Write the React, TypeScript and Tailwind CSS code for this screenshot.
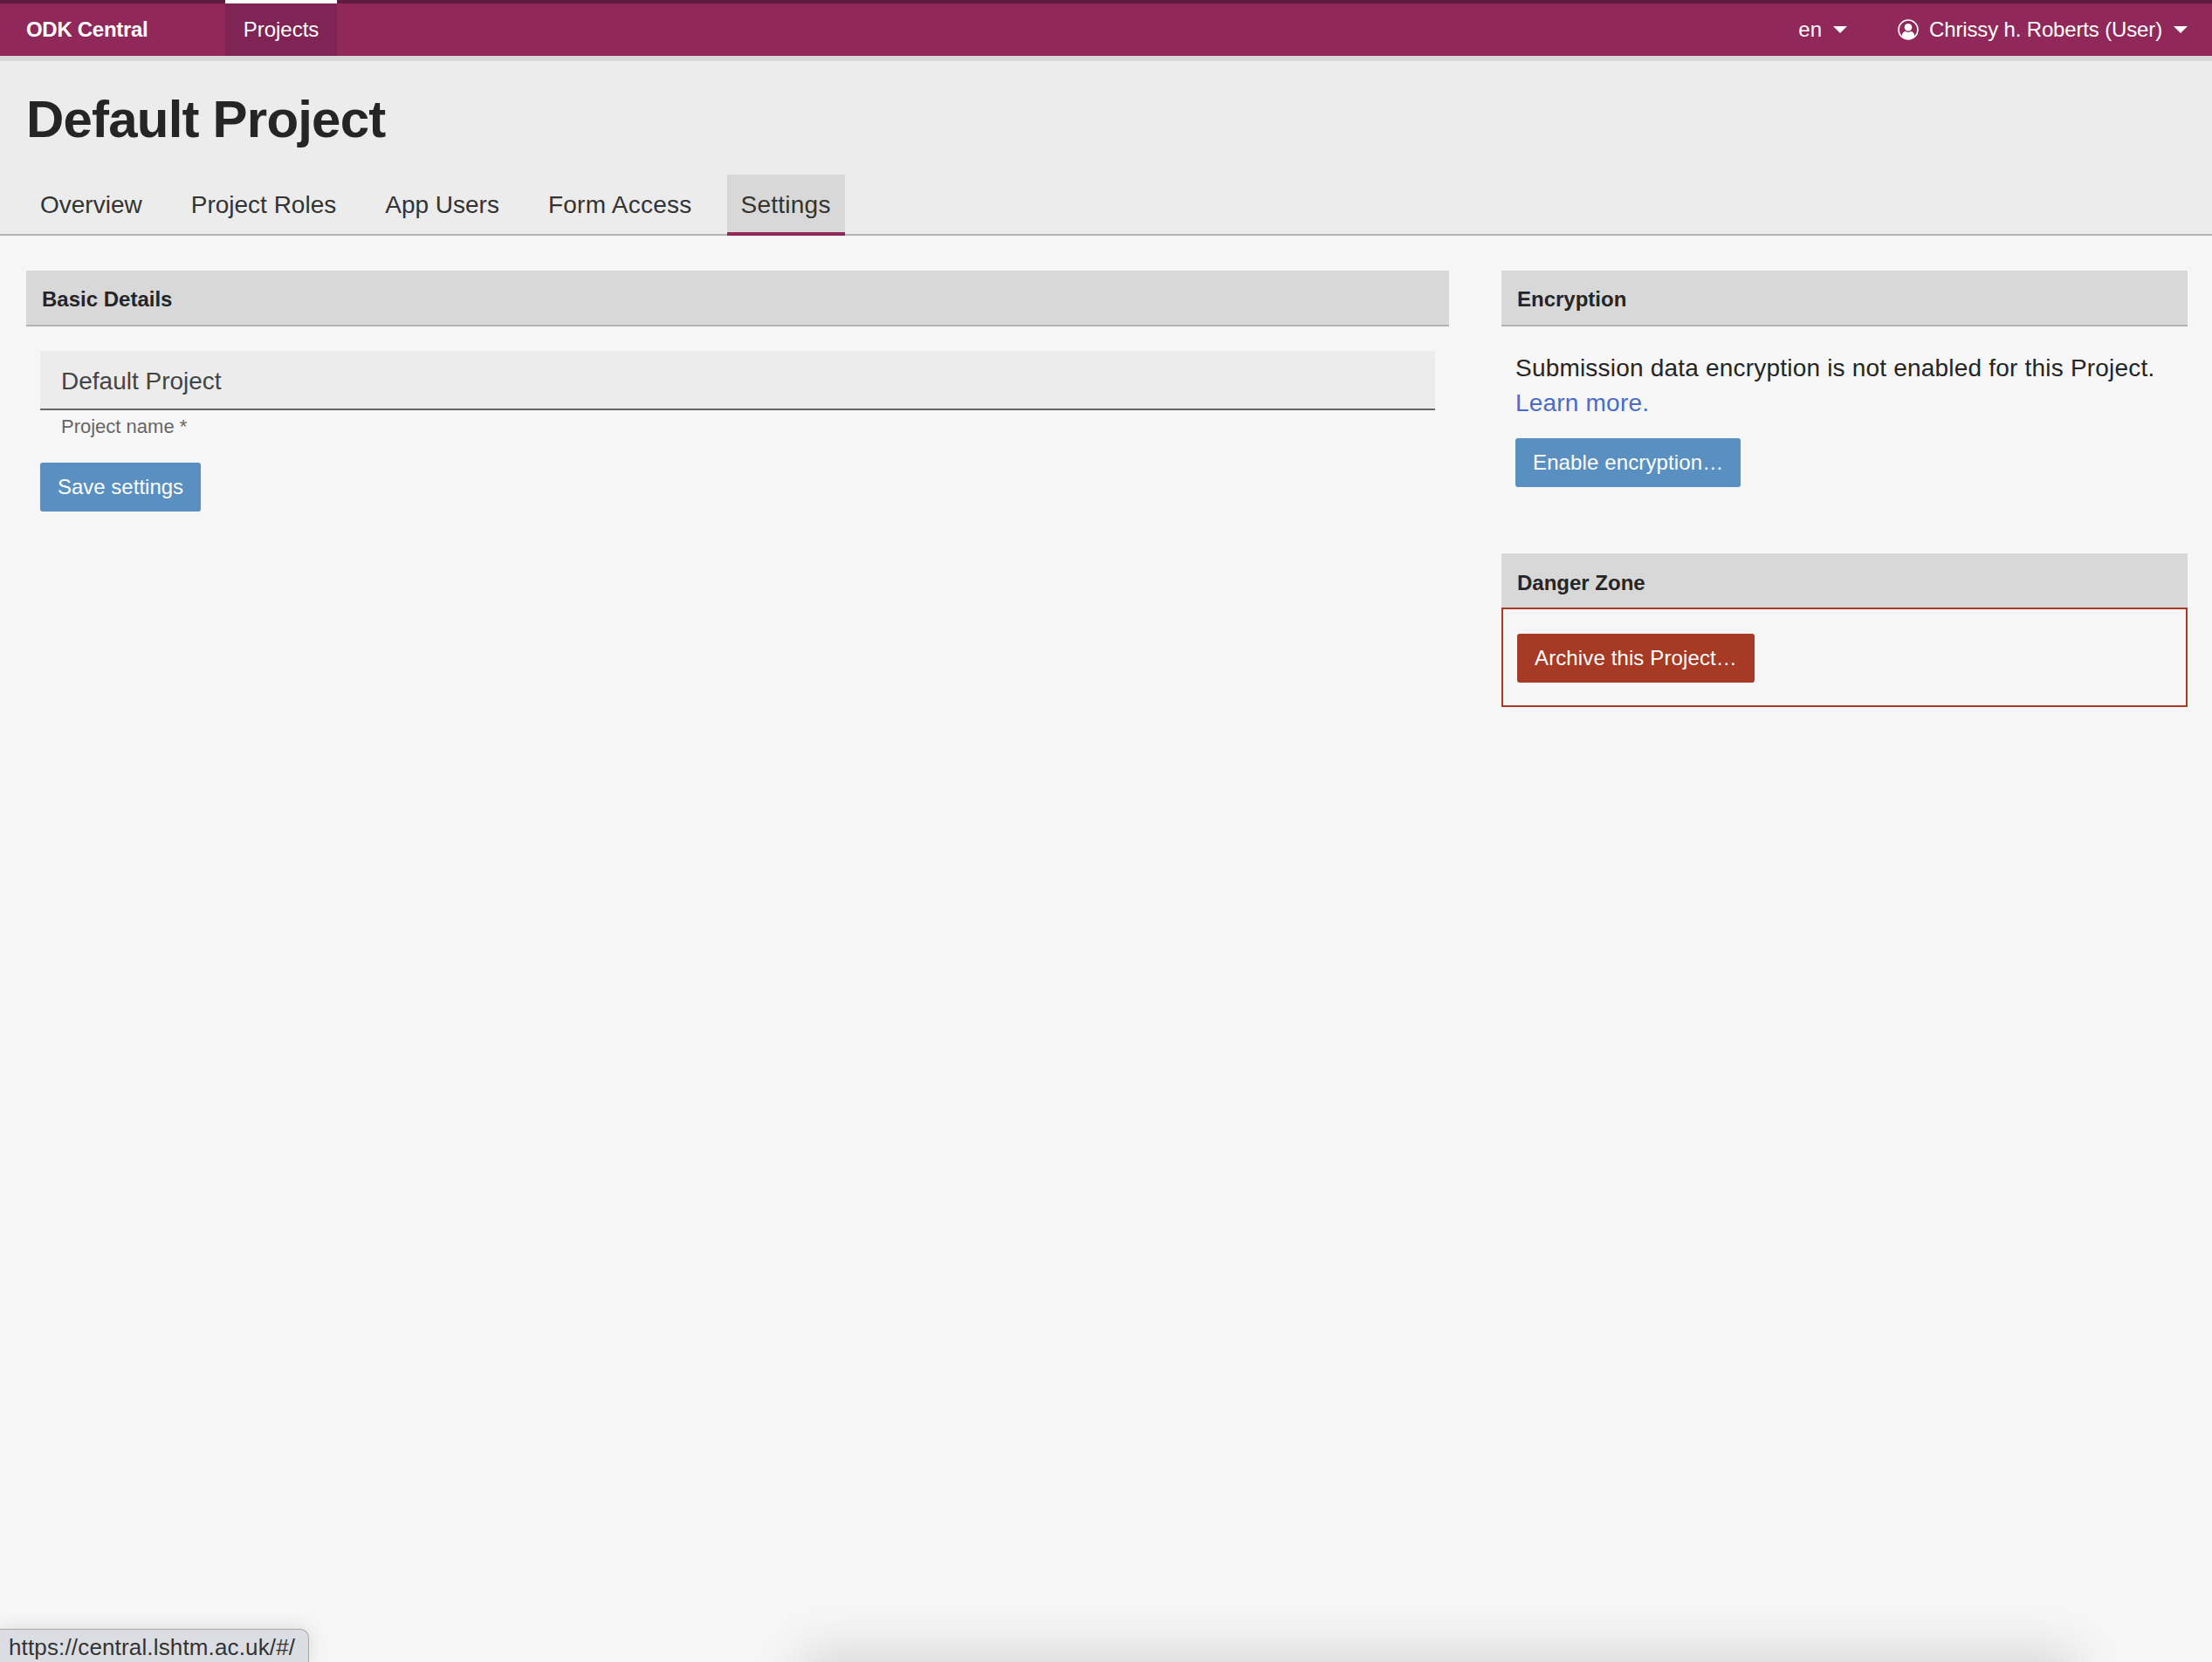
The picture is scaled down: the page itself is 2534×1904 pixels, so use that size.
import React from "react";

function Caret() {
  return <span className="ml-[13px] inline-block h-0 w-0 border-x-[8px] border-t-[8px] border-x-transparent border-t-white" />;
}

function UserIcon() {
  return (
    <svg viewBox="0 0 24 24" className="ml-[58px] mr-[12px] h-[24px] w-[24px]" aria-hidden="true">
      <circle cx="12" cy="12" r="11" fill="none" stroke="white" strokeWidth="1.6" />
      <circle cx="12" cy="9.2" r="4.3" fill="white" />
      <path d="M4.6 19.4c.4-3.6 2.6-5.4 4.6-5.4 1 .6 1.8.9 2.8.9s1.8-.3 2.8-.9c2 0 4.2 1.8 4.6 5.4-2 1.9-4.6 3-7.4 3s-5.4-1.1-7.4-3z" fill="white" />
    </svg>
  );
}

function Heading({ children, danger }: { children: React.ReactNode; danger?: boolean }) {
  return (
    <div className={`flex items-center bg-[#d8d8d8] pl-[18px] text-[24px] font-bold text-[#252525] ${danger ? "h-[62px] pt-[6px]" : "h-[64px] border-b-2 border-[#b3b3b3] pt-[4px]"}`}>
      {children}
    </div>
  );
}

function Tab({ label, active, wide }: { label: string; active?: boolean; wide?: boolean }) {
  return (
    <div className={`flex h-[70px] items-center px-[16px] text-[28px] text-[#333] ${wide ? "tracking-[0.25px]" : ""} ${active ? "border-b-4 border-[#90285a] bg-[#d8d8d8] pt-[4px]" : ""}`}>
      {label}
    </div>
  );
}

function Button({ children, red, plain }: { children: React.ReactNode; red?: boolean; plain?: boolean }) {
  return (
    <button className={`h-[56px] rounded-[3px] px-[20px] text-[24px] text-white ${plain ? "" : "tracking-[0.12px]"} ${red ? "bg-[#a63a24]" : "bg-[#5a8fc2]"}`}>
      {children}
    </button>
  );
}

export default function App() {
  return (
    <div className="relative h-screen w-full overflow-hidden bg-[#f6f6f6] font-['Liberation_Sans',Arial,sans-serif]">
      <nav className="flex h-[64px] items-center border-t-4 border-[#5f1a40] bg-[#90285a] text-[24px] text-white">
        <div className="w-[258px] pl-[30px] font-bold tracking-[-0.3px]">ODK Central</div>
        <div className="-mt-[4px] flex h-[64px] w-[128px] items-center justify-center border-t-4 border-white bg-[#802355]">Projects</div>
        <div className="ml-auto flex items-center pr-[28px]">
          <span>en</span>
          <Caret />
          <UserIcon />
          <span className="tracking-[-0.15px]">Chrissy h. Roberts (User)</span>
          <Caret />
        </div>
      </nav>
      <header className="h-[206px] border-t-[6px] border-b-2 border-t-[#d8d8d8] border-b-[#b3b3b3] bg-[#ececec]">
        <h1 className="pl-[30px] pt-[34px] text-[60px] font-bold leading-[66px] tracking-[-0.8px] text-[#252525]">Default Project</h1>
        <div className="mt-[30px] flex gap-[24px] pl-[30px]">
          <Tab label="Overview" />
          <Tab label="Project Roles" />
          <Tab label="App Users" />
          <Tab label="Form Access" wide />
          <Tab label="Settings" active wide />
        </div>
      </header>
      <main className="flex gap-[60px] pl-[30px] pr-[28px] pt-[40px]">
        <section className="w-[1630px]">
          <Heading>Basic Details</Heading>
          <div className="px-[16px] pt-[28px]">
            <div className="flex h-[68px] items-center border-b-2 border-[#666] bg-[#ececec] pl-[24px] pt-[3px] text-[28px] text-[#444]">Default Project</div>
            <div className="pl-[24px] pt-[6px] text-[22px] leading-[26px] text-[#666]">Project name *</div>
            <div className="pt-[28px]">
              <Button plain>Save settings</Button>
            </div>
          </div>
        </section>
        <aside className="w-[786px]">
          <Heading>Encryption</Heading>
          <div className="px-[16px] pt-[28px]">
            <p className="text-[28px] leading-[40px] tracking-[0.2px] text-[#252525]">
              Submission data encryption is not enabled for this Project. <a className="text-[#4a6bc9]">Learn more.</a>
            </p>
            <div className="pt-[20px]">
              <Button>Enable encryption…</Button>
            </div>
          </div>
          <div className="mt-[76px]">
            <Heading danger>Danger Zone</Heading>
            <div className="h-[114px] border-2 border-[#a63a24] pl-[16px] pt-[28px]">
              <Button red>Archive this Project…</Button>
            </div>
          </div>
        </aside>
      </main>
      <div className="absolute left-[925px] top-full h-[40px] w-[1445px] shadow-[0_0_60px_6px_rgba(0,0,0,0.16)]" />
      <div className="absolute bottom-0 left-0 flex h-[38px] w-[354px] items-center rounded-tr-[10px] border-r border-t border-[#a8a8ac] bg-[#dcdde2] pl-[10px] pt-[3px] text-[26px] tracking-[0.15px] text-[#333] shadow-[0_0_20px_rgba(0,0,0,0.12)]">
        https://central.lshtm.ac.uk/#/
      </div>
    </div>
  );
}
